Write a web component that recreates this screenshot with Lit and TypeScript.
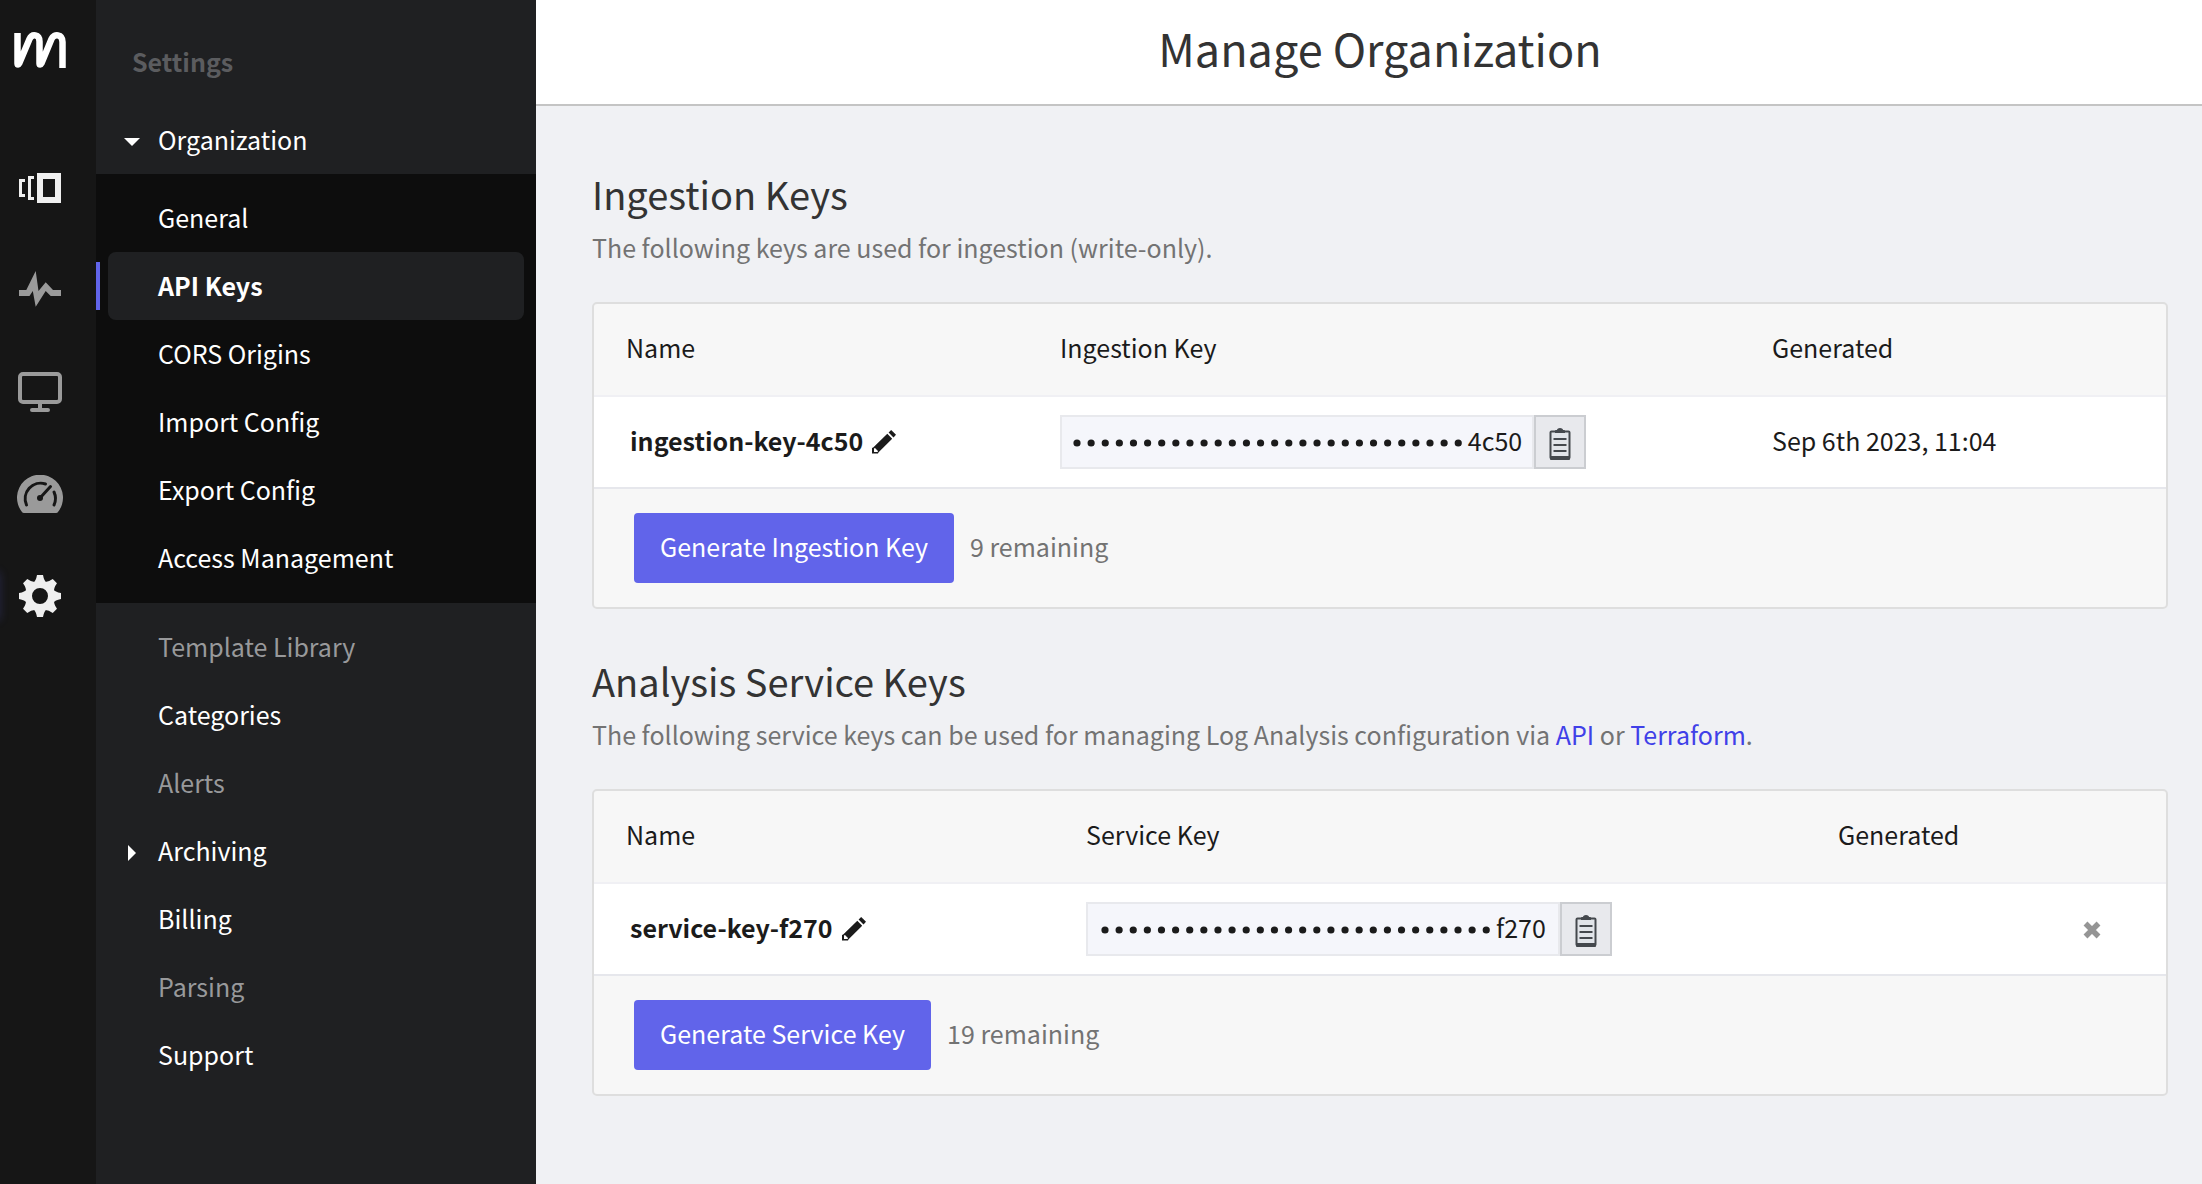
import { LitElement, html, css, svg, nothing } from "lit";
import { customElement, property } from "lit/decorators.js";
import { classMap } from "lit/directives/class-map.js";

const DOTS = 28;

const pencil = html`<svg class="pencil" viewBox="0 0 24 24" aria-hidden="true">
  <path fill-rule="evenodd" fill="currentColor" d="M15.3 3.8 20.2 8.7 6.6 22.3 6 23.6H0V18L1.2 17.4ZM3 18 6 21 5.6 22H2V18.6Z"/>
  <path fill="currentColor" d="M16.6 2.6 19.2 0 24 4.8 21.5 7.5Z"/>
</svg>`;

const clipboard = html`<svg class="clip" viewBox="0 0 22 32" aria-hidden="true">
  <rect x="1.5" y="3.5" width="19" height="27" rx="1" fill="#e1e4e9" stroke="#44484d" stroke-width="2"/>
  <path d="M1 28h20v3a1 1 0 0 1-1 1H2a1 1 0 0 1-1-1Z" fill="#44484d"/>
  <path d="M6 5V3a1 1 0 0 1 1-1h1c0-1 1-2 3-2s3 1 3 2h1a1 1 0 0 1 1 1v2Z" fill="#44484d"/>
  <path d="M4.5 11h13M4.5 17h13M4.5 23h13" stroke="#44484d" stroke-width="2"/>
</svg>`;

@customElement("nav-rail")
class NavRail extends LitElement {
  static styles = css`
    :host { display: block; width: 96px; flex: none; background: #161616; }
    .rail { display: flex; flex-direction: column; align-items: center; padding: 28px 16px 0 0; }
    a { display: flex; align-items: center; justify-content: center; width: 80px; height: 102px; color: #9a9a9a; }
    .on { color: #efefef; }
    .logo { height: 44px; margin-bottom: 65px; color: #fff; }
    .glow { position: relative; }
    .glow::before { content: ""; position: absolute; left: -8px; top: 27px; width: 8px; height: 48px; box-shadow: 0 0 10px 0 rgba(97, 100, 234, 0.22); }
    svg { display: block; }
  `;

  render() {
    const teeth = [0, 45, 90, 135, 180, 225, 270, 315];
    return html`<nav class="rail" aria-label="Product">
      <a class="logo" href="#home" aria-label="Home"><svg width="54" height="38" viewBox="0 0 54 38">
        <path d="M4.5 2V32.5C4.5 33.8 5.6 33.8 6.2 32.5L16.5 8C19 2.4 26.5 3 26.5 10.5V32.5C26.5 33.8 27.8 33.8 28.4 32.5L38.5 8C41 2.4 49.5 3 49.5 11V37" fill="none" stroke="currentColor" stroke-width="6.5"/>
      </svg></a>
      <a class="on" href="#views" aria-label="Views"><svg width="42" height="30" viewBox="0 0 42 30" fill="currentColor">
        <path fill-rule="evenodd" d="M18 0H42V30H18ZM24 6V24H36V6Z"/>
        <path d="M9 3h6v3h-3v18h3v3H9ZM0 6h6v3H3v12h3v3H0Z"/>
      </svg></a>
      <a href="#activity" aria-label="Activity"><svg width="42" height="38" viewBox="0 0 42 38" fill="currentColor">
        <path d="M0 19h7.3L16.7 0l2.8 20 7.2-8.7L34 19h8v6H31.7l-5-5-10 15.7-2.9-15.7L10.5 25H0Z"/>
      </svg></a>
      <a href="#screens" aria-label="Screens"><svg width="44" height="41" viewBox="0 0 44 41" fill="none" stroke="currentColor" stroke-width="4">
        <rect x="2" y="2" width="40" height="28" rx="3"/>
        <path d="M22 30v8M14 38h16" stroke-linecap="round"/>
      </svg></a>
      <a href="#usage" aria-label="Usage"><svg width="46" height="38" viewBox="0 0 46 38">
        <path d="M5 37A23 23 0 1 1 41 37Q40.5 38 39 38H7Q5.5 38 5 37Z" fill="currentColor"/>
        <g fill="none" stroke="#161616" stroke-width="3" stroke-linecap="round">
          <path d="M9.5 30A15.5 15.5 0 0 1 28.5 9M37 17A15.5 15.5 0 0 1 37 30M23 23 33.5 11.5"/>
        </g>
        <circle cx="23" cy="23" r="3" fill="#161616"/>
      </svg></a>
      <a class="on glow" href="#settings" aria-label="Settings"><svg width="42" height="42" viewBox="-21 -21 42 42" fill="currentColor">
        ${teeth.map((t) => svg`<path transform="rotate(${t})" d="M-7-13Q-4-15-3-21H3Q4-15 7-13V-9H-7Z"/>`)}
        <circle r="11.5" fill="none" stroke="currentColor" stroke-width="7"/>
      </svg></a>
    </nav>`;
  }
}

type Item = { label: string; dim?: boolean; active?: boolean; caret?: boolean };

@customElement("settings-menu")
class SettingsMenu extends LitElement {
  static styles = css`
    :host { display: block; width: 440px; flex: none; background: #1f2022; }
    h2 { margin: 0; padding: 43px 36px 0; font-size: 25px; line-height: 36px; font-weight: 700; color: #5b5c5f; }
    .group { margin-top: 27px; }
    a { display: flex; align-items: center; position: relative; box-sizing: border-box; height: 68px; padding: 0 0 2px 50px; margin: 0 12px; border-radius: 8px; color: #fff; text-decoration: none; }
    .dim { color: #98999b; }
    .active { background: #1f2022; font-weight: 700; }
    .active::before { content: ""; position: absolute; left: -12px; top: 10px; width: 4px; height: 48px; background: #6164ea; }
    .sub { background: #0d0d0d; padding: 10px 0 11px; }
    .rest { padding-top: 10px; }
    .caret { position: absolute; left: 16px; top: 28px; width: 16px; height: 16px; }
  `;

  link(i: Item) {
    return html`<a href="#" class=${classMap({ dim: !!i.dim, active: !!i.active })} aria-current=${i.active ? "page" : nothing}>
      ${i.caret ? html`<svg class="caret" viewBox="0 0 16 16"><path d="M4 0 12 8 4 16Z" fill="#fff"/></svg>` : nothing}${i.label}</a>`;
  }

  render() {
    const sub: Item[] = [
      { label: "General" }, { label: "API Keys", active: true }, { label: "CORS Origins" },
      { label: "Import Config" }, { label: "Export Config" }, { label: "Access Management" },
    ];
    const rest: Item[] = [
      { label: "Template Library", dim: true }, { label: "Categories" }, { label: "Alerts", dim: true },
      { label: "Archiving", caret: true }, { label: "Billing" }, { label: "Parsing", dim: true }, { label: "Support" },
    ];
    return html`<nav aria-label="Settings">
      <h2>Settings</h2>
      <div class="group"><a href="#"><svg class="caret" viewBox="0 0 16 16"><path d="M0 4H16L8 12Z" fill="#fff"/></svg>Organization</a></div>
      <div class="sub">${sub.map((i) => this.link(i))}</div>
      <div class="rest">${rest.map((i) => this.link(i))}</div>
    </nav>`;
  }
}

@customElement("key-card")
class KeyCard extends LitElement {
  @property() column = "";
  @property() name = "";
  @property() suffix = "";
  @property() generated = "";
  @property() action = "";
  @property() remaining = "";
  @property({ type: Boolean }) removable = false;

  static styles = css`
    :host { display: block; }
    .card { border: 2px solid #dedede; border-radius: 5px; background: #f7f7f7; overflow: hidden; }
    table { width: 100%; border-collapse: separate; border-spacing: 0; table-layout: fixed; }
    th, td { box-sizing: border-box; padding: 0; }
    th { height: 93px; padding-bottom: 5px; text-align: left; font-weight: 400; border-bottom: 2px solid #f0f0f4; }
    td { height: 92px; background: #fff; border-bottom: 2px solid #e6e7ec; }
    th:first-child { padding-left: 32px; }
    td:first-child { padding-left: 36px; }
    .c1 { width: 466px; }
    .c2 { width: 712px; }
    .removable .c1 { width: 492px; }
    .removable .c2 { width: 752px; }
    .c4 { width: 83px; }
    .text { display: block; padding-bottom: 5px; }
    .name { display: flex; align-items: center; gap: 9px; font-weight: 700; }
    button { font: inherit; color: inherit; border: 0; padding: 0; margin: 0; background: none; cursor: pointer; }
    .edit, .remove { display: flex; }
    .pencil { width: 24px; height: 24px; display: block; }
    .key { display: flex; width: 526px; height: 54px; box-sizing: border-box; }
    .value { display: flex; align-items: center; justify-content: center; flex: 1; box-sizing: border-box; border: 2px solid #e8e9ed; background: #f5f6fb; }
    .dots { display: block; height: 12px; width: 396px; color: #1b1b1b; }
    .copy { display: flex; align-items: center; justify-content: center; width: 52px; box-sizing: border-box; padding-top: 4px; border: 2px solid #cbcdd1; background: #e8e9ed; }
    .clip { width: 22px; height: 32px; display: block; }
    .foot { display: flex; align-items: center; gap: 16px; padding: 24px 40px; color: #737373; }
    .primary { height: 70px; padding: 0 26px; border-radius: 4px; background: #6164ea; color: #fff; }
  `;

  render() {
    return html`<div class=${classMap({ card: true, removable: this.removable })}>
      <table>
        <thead><tr>
          <th class="c1" scope="col">Name</th><th class="c2" scope="col">${this.column}</th><th scope="col">Generated</th>
          ${this.removable ? html`<th class="c4"></th>` : nothing}
        </tr></thead>
        <tbody><tr>
          <td><div class="name"><span class="text">${this.name}</span><button class="edit" aria-label="Rename key">${pencil}</button></div></td>
          <td><div class="key">
            <div class="value"><svg class="dots" viewBox="0 0 396 12" aria-hidden="true" fill="currentColor">
              ${Array.from({ length: DOTS }, (_, i) => svg`<circle cx=${5 + i * 14.12} cy="7" r="3.6"/>`)}
            </svg><span class="text">${this.suffix}</span></div>
            <button class="copy" aria-label="Copy key">${clipboard}</button>
          </div></td>
          <td><span class="text">${this.generated}</span></td>
          ${this.removable ? html`<td><button class="remove" aria-label="Delete key"><svg width="18" height="20" viewBox="0 -2 18 20"><path d="M2.5 2.5 15.5 15.5M15.5 2.5 2.5 15.5" stroke="#959595" stroke-width="5.5"/></svg></button></td>` : nothing}
        </tr></tbody>
      </table>
      <div class="foot"><button class="primary"><span class="text">${this.action}</span></button><span class="text">${this.remaining}</span></div>
    </div>`;
  }
}

@customElement("app-root")
class AppRoot extends LitElement {
  static styles = css`
    :host { display: flex; min-height: 100vh; background: #f0f1f4; color: #1b1b1b; font: 400 25px/36px "Noto Sans CJK SC", "Noto Sans", sans-serif; }
    main { flex: 1; min-width: 0; }
    header { display: flex; align-items: center; justify-content: center; box-sizing: border-box; height: 106px; padding: 0 34px 8px 56px; border-bottom: 2px solid #c4c4c4; background: #fff; }
    h1 { margin: 0; font-size: 45px; line-height: 60px; font-weight: 400; color: #333; }
    .content { padding: 63px 34px 0 56px; }
    section { margin-bottom: 46px; }
    h2 { margin: 0; font-size: 38px; line-height: 50px; font-weight: 400; color: #333; }
    p { margin: 10px 0 37px; color: #737373; }
    section + section { padding-top: 1px; }
    a { color: #4040e8; text-decoration: none; }
  `;

  render() {
    return html`<nav-rail></nav-rail>
      <settings-menu></settings-menu>
      <main>
        <header><h1>Manage Organization</h1></header>
        <div class="content">
          <section>
            <h2>Ingestion Keys</h2>
            <p>The following keys are used for ingestion (write-only).</p>
            <key-card column="Ingestion Key" name="ingestion-key-4c50" suffix="4c50" generated="Sep 6th 2023, 11:04" action="Generate Ingestion Key" remaining="9 remaining"></key-card>
          </section>
          <section>
            <h2>Analysis Service Keys</h2>
            <p>The following service keys can be used for managing Log Analysis configuration via <a href="#api">API</a> or <a href="#terraform">Terraform</a>.</p>
            <key-card column="Service Key" name="service-key-f270" suffix="f270" action="Generate Service Key" remaining="19 remaining" removable></key-card>
          </section>
        </div>
      </main>`;
  }
}
